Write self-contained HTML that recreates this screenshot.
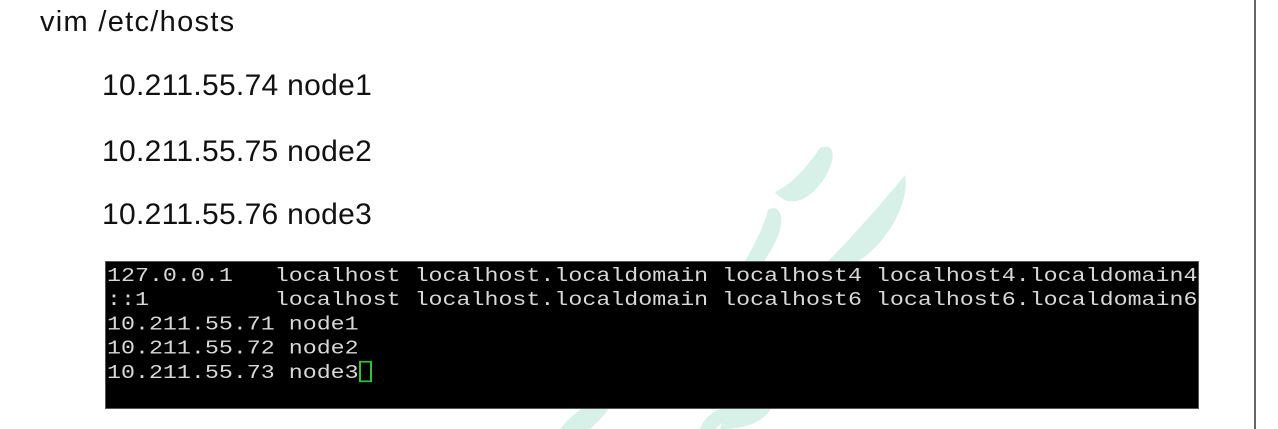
<!DOCTYPE html>
<html><head><style>
html,body{margin:0;padding:0;background:#fff;width:1278px;height:429px;overflow:hidden;position:relative}
.t{position:absolute;font-family:"Liberation Sans",sans-serif;color:#111;font-size:30px;line-height:34px;white-space:nowrap;letter-spacing:0.3px}
.term{position:absolute;left:105px;top:261px;width:1094px;height:148px;background:#000;border:1px solid #555;box-sizing:border-box}
.term pre{margin:0;position:absolute;left:1px;top:2px;font-family:"Liberation Mono",monospace;font-size:23.3px;line-height:28.4px;color:#d8d8d8;transform:scaleY(0.85);transform-origin:0 0}
.cur{display:inline-block;width:13px;height:25px;border:2px solid #2bc33a;box-sizing:border-box;vertical-align:-5px}
.vr{position:absolute;left:1254px;top:0;width:2px;height:429px;background:#666}
</style></head><body>
<svg style="position:absolute;left:0;top:0" width="1278" height="429">
<g fill="#d7f0e8">
<path d="M820 148 C840 140 835 170 815 190 C800 205 785 205 775 192 C790 185 805 170 820 148Z"/>
<path d="M768 210 C775 205 785 210 780 230 C770 260 745 290 720 300 C740 270 760 240 768 210Z"/>
<path d="M905 175 C910 200 890 240 860 260 C840 275 810 290 790 300 C820 270 860 230 905 175Z"/>
<path d="M740 380 C760 370 790 380 770 410 C760 425 740 429 720 429 C725 410 730 395 740 380Z"/>
<path d="M560 429 C575 410 600 395 620 390 C610 410 600 420 590 429Z"/>
<path d="M700 429 C705 415 720 405 730 410 C725 420 720 425 715 429Z"/>
</g>
</svg>
<div class="t" style="left:40px;top:5px;font-size:29px;letter-spacing:1.3px">vim /etc/hosts</div>
<div class="t" style="left:102px;top:69px">10.211.55.74 node1</div>
<div class="t" style="left:102px;top:135px">10.211.55.75 node2</div>
<div class="t" style="left:102px;top:198px">10.211.55.76 node3</div>
<div class="term"><pre>127.0.0.1   localhost localhost.localdomain localhost4 localhost4.localdomain4
::1         localhost localhost.localdomain localhost6 localhost6.localdomain6
10.211.55.71 node1
10.211.55.72 node2
10.211.55.73 node3<span class="cur"></span></pre></div>
<div class="vr"></div>
</body></html>
